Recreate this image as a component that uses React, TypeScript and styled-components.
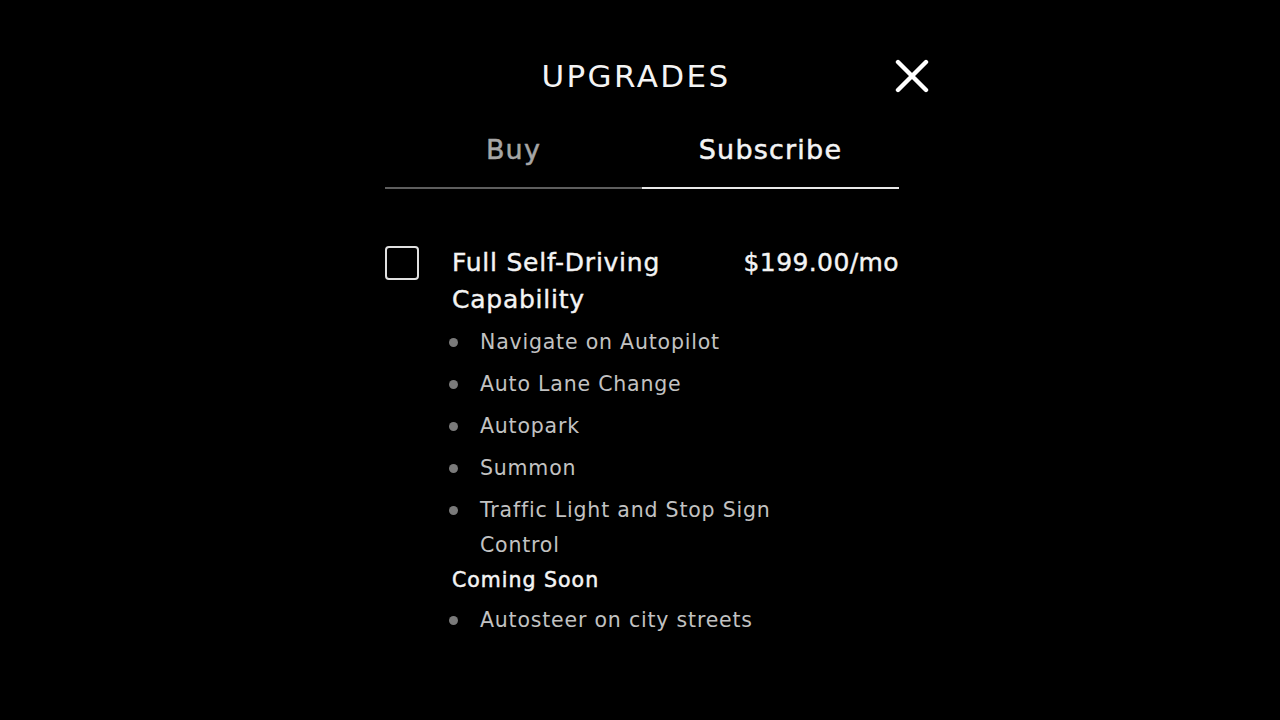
import React, { useState } from 'react';
import styled, { createGlobalStyle } from 'styled-components';

const GlobalStyle = createGlobalStyle`
  html, body {
    margin: 0;
    padding: 0;
    background: #000;
  }
  body {
    width: 1280px;
    height: 720px;
    overflow: hidden;
    font-family: "DejaVu Sans", "Noto Sans", sans-serif;
    color: #f2f2f2;
  }
`;

const Screen = styled.div`
  width: 1280px;
  height: 720px;
  background: #000;
  padding-left: 4px;
  box-sizing: border-box;
`;

const Panel = styled.div`
  width: 514px;
  margin: 0 auto;
  padding-top: 56px;
`;

const Header = styled.div`
  position: relative;
  height: 40px;
  display: flex;
  align-items: center;
  justify-content: center;
`;

const Title = styled.h1`
  margin: 0 0 0 -12px;
  font-size: 31px;
  font-weight: normal;
  letter-spacing: 2.4px;
  line-height: 40px;
  color: #f4f4f4;
`;

const CloseButton = styled.button`
  position: absolute;
  right: -30px;
  top: 3px;
  width: 34px;
  height: 34px;
  padding: 0;
  border: none;
  background: none;
  cursor: pointer;
`;

const Tabs = styled.div`
  display: flex;
`;

const Tab = styled.button<{ $active?: boolean }>`
  flex: 1;
  padding: 36px 0 19px;
  border: none;
  border-bottom: 2px solid ${(p) => (p.$active ? '#e8e8e8' : '#5e5e5e')};
  background: none;
  font-family: inherit;
  font-size: 27px;
  letter-spacing: 1.2px;
  line-height: 36px;
  -webkit-text-stroke: 0.5px currentColor;
  color: ${(p) => (p.$active ? '#f4f4f4' : '#a6a6a6')};
  cursor: pointer;
`;

const Option = styled.div`
  display: flex;
  align-items: flex-start;
  margin-top: 56px;
`;

const Checkbox = styled.button<{ $checked?: boolean }>`
  flex: none;
  width: 34px;
  height: 34px;
  margin-top: 1px;
  padding: 0;
  box-sizing: border-box;
  border: 2px solid #e0e0e0;
  border-radius: 4px;
  background: ${(p) => (p.$checked ? '#e0e0e0' : 'transparent')};
  cursor: pointer;
`;

const OptionBody = styled.div`
  flex: 1;
  margin-left: 33px;
`;

const OptionHead = styled.div`
  display: flex;
  justify-content: space-between;
  gap: 24px;
`;

const OptionName = styled.div`
  max-width: 260px;
  font-size: 25px;
  line-height: 36.5px;
  letter-spacing: 0.75px;
  -webkit-text-stroke: 0.4px currentColor;
  color: #f4f4f4;
`;

const Price = styled.div`
  font-size: 25px;
  line-height: 36.5px;
  letter-spacing: 0.4px;
  -webkit-text-stroke: 0.4px currentColor;
  color: #f4f4f4;
  white-space: nowrap;
`;

const FeatureList = styled.ul<{ $gap?: number }>`
  list-style: none;
  margin: ${(p) => p.$gap ?? 7}px 0 0;
  padding: 0;
`;

const Feature = styled.li`
  position: relative;
  max-width: 320px;
  padding-left: 28px;
  margin-bottom: 7px;
  font-size: 20.5px;
  line-height: 35px;
  letter-spacing: 0.8px;
  color: #c2c2c2;

  &::before {
    content: '';
    position: absolute;
    left: -3px;
    top: 13px;
    width: 9px;
    height: 9px;
    border-radius: 50%;
    background: #7a7a7a;
  }

  &:last-child {
    margin-bottom: 0;
  }
`;

const SectionLabel = styled.div`
  font-size: 20.5px;
  line-height: 35px;
  letter-spacing: 1px;
  -webkit-text-stroke: 0.5px currentColor;
  color: #f4f4f4;
`;

const CloseIcon = () => (
  <svg width="34" height="34" viewBox="0 0 34 34">
    <path d="M3 3 L31 31 M31 3 L3 31" stroke="#fff" strokeWidth="4.4" strokeLinecap="round" />
  </svg>
);

const features = [
  'Navigate on Autopilot',
  'Auto Lane Change',
  'Autopark',
  'Summon',
  'Traffic Light and Stop Sign Control',
];

const upcoming = ['Autosteer on city streets'];

export default function App() {
  const [tab, setTab] = useState<'buy' | 'subscribe'>('subscribe');
  const [checked, setChecked] = useState(false);

  return (
    <Screen>
      <GlobalStyle />
      <Panel>
        <Header>
          <Title>UPGRADES</Title>
          <CloseButton aria-label="Close">
            <CloseIcon />
          </CloseButton>
        </Header>
        <Tabs>
          <Tab $active={tab === 'buy'} onClick={() => setTab('buy')}>Buy</Tab>
          <Tab $active={tab === 'subscribe'} onClick={() => setTab('subscribe')}>Subscribe</Tab>
        </Tabs>
        <Option>
          <Checkbox $checked={checked} onClick={() => setChecked(!checked)} aria-label="Full Self-Driving Capability" />
          <OptionBody>
            <OptionHead>
              <OptionName>Full Self-Driving Capability</OptionName>
              <Price>$199.00/mo</Price>
            </OptionHead>
            <FeatureList>
              {features.map((f) => (
                <Feature key={f}>{f}</Feature>
              ))}
            </FeatureList>
            <SectionLabel>Coming Soon</SectionLabel>
            <FeatureList $gap={5}>
              {upcoming.map((f) => (
                <Feature key={f}>{f}</Feature>
              ))}
            </FeatureList>
          </OptionBody>
        </Option>
      </Panel>
    </Screen>
  );
}
